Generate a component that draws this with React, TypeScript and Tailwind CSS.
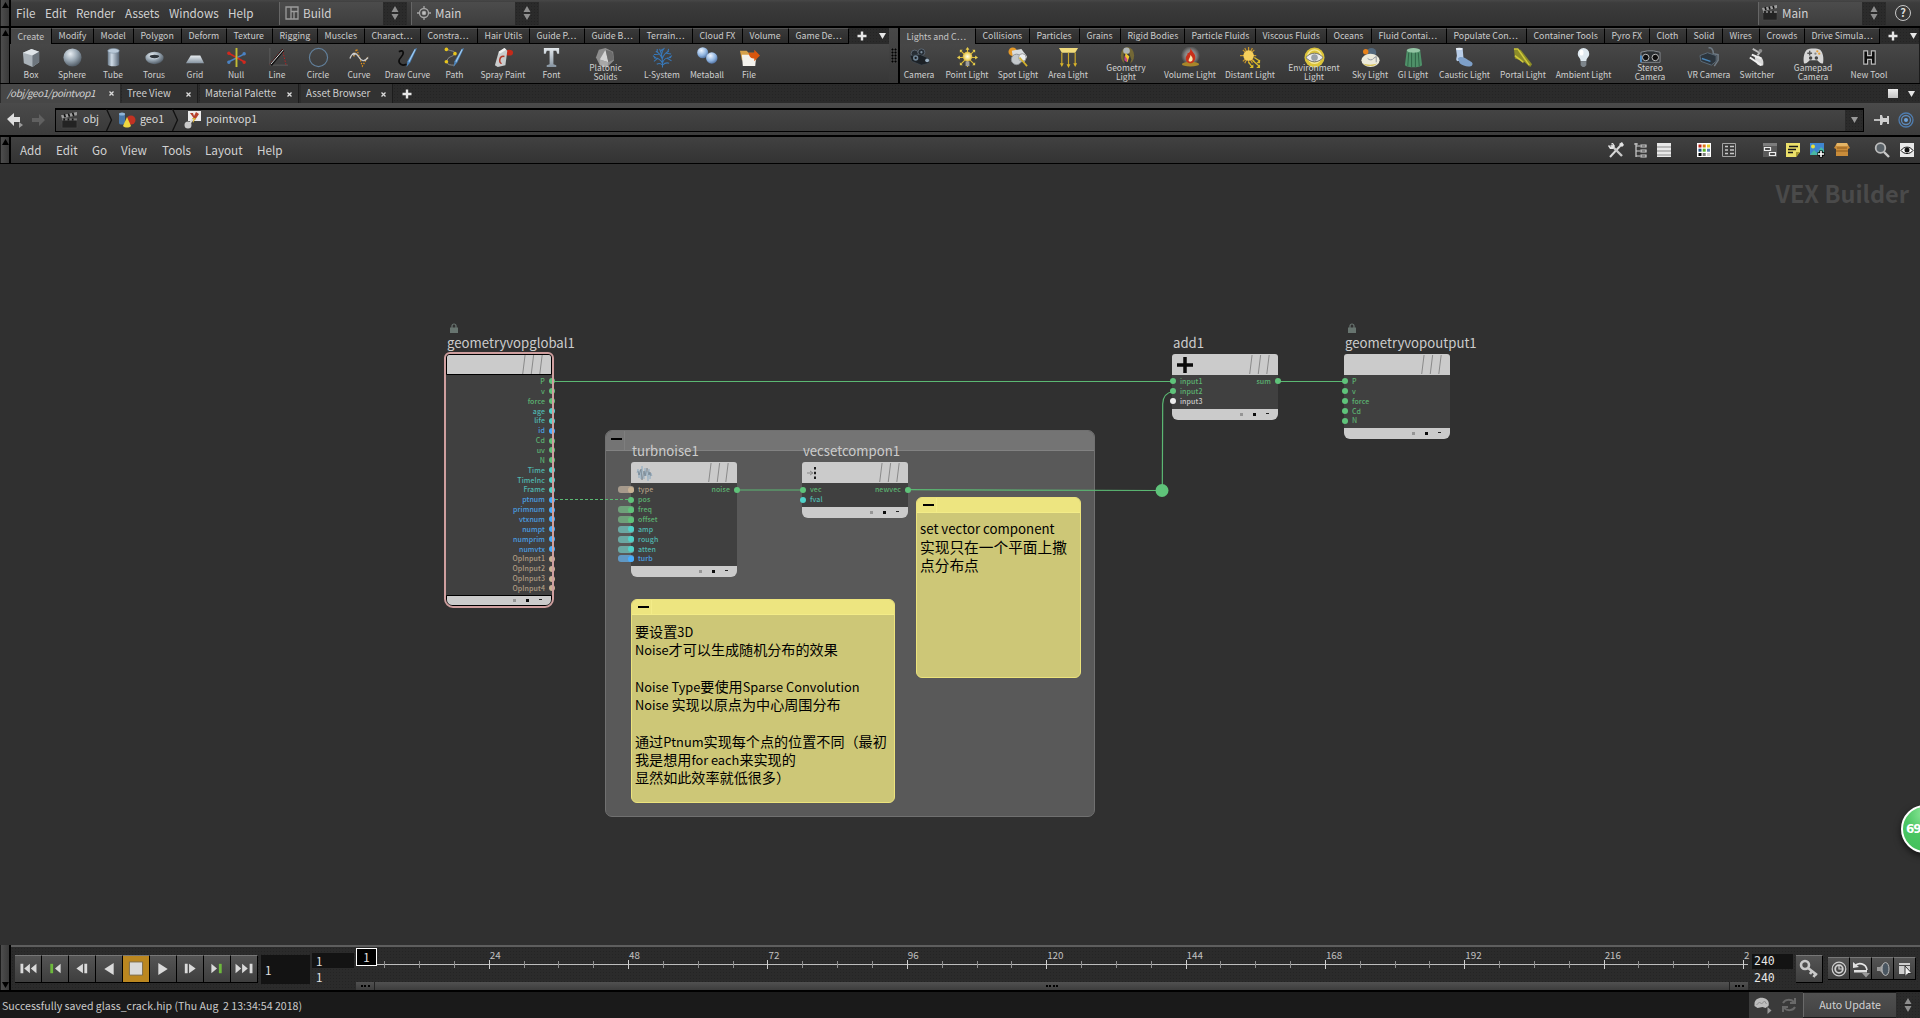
import React from "react";

const PANEL = "bg-[linear-gradient(#414141,#333333)]";
const DOTS = "bg-[#2b2b2b] bg-[radial-gradient(#242424_0.6px,transparent_0.9px)] bg-[size:3px_3px]";

/* ---------- shelf icons, all on a 22 x 22 grid ---------- */

const Defs = () => (
  <svg className="absolute h-0 w-0" aria-hidden="true">
    <defs>
      <radialGradient id="ball" cx=".38" cy=".3" r=".75">
        <stop offset="0" stopColor="#e8eef3" />
        <stop offset=".5" stopColor="#9aa8b4" />
        <stop offset="1" stopColor="#4a545e" />
      </radialGradient>
      <radialGradient id="blueball" cx=".38" cy=".3" r=".75">
        <stop offset="0" stopColor="#eef5ff" />
        <stop offset=".6" stopColor="#8fb4e0" />
        <stop offset="1" stopColor="#4a6a9a" />
      </radialGradient>
      <linearGradient id="tube" x1="0" x2="1" y1="0" y2="0">
        <stop offset="0" stopColor="#6b7c8c" />
        <stop offset=".35" stopColor="#cfdbe6" />
        <stop offset="1" stopColor="#566474" />
      </linearGradient>
      <linearGradient id="steel" x1="0" x2="0" y1="0" y2="1">
        <stop offset="0" stopColor="#e6ebef" />
        <stop offset="1" stopColor="#8593a0" />
      </linearGradient>
      <radialGradient id="glow">
        <stop offset="0" stopColor="#fffef0" />
        <stop offset=".6" stopColor="#f3dc7a" />
        <stop offset="1" stopColor="#d8b23a" />
      </radialGradient>
      <radialGradient id="halo">
        <stop offset="0" stopColor="#b0b0b0" />
        <stop offset=".6" stopColor="#808080" />
        <stop offset="1" stopColor="#808080" stopOpacity="0" />
      </radialGradient>
    </defs>
  </svg>
);

const pen = (
  <g>
    <path d="M21 1 14 16l-4 5 1-6L18.500 2z" fill="#4f86bd" />
    <path d="m19 2.500-6.500 13" stroke="#a5cdf0" strokeWidth="1.200" />
  </g>
);

const shelfIcons: Record<string, React.ReactNode> = {
  box: (
    <g>
      <path d="m2 6 9-4 8 3v11l-7 5-9-4z" fill="#a9b1b8" />
      <path d="m2 6 9-4 8 3-7 4z" fill="#dfe4e8" />
      <path d="m12 9 7-4v11l-7 5z" fill="#6d757d" />
    </g>
  ),
  sphere: <circle cx="11" cy="11" r="9.500" fill="url(#ball)" />,
  tube: (
    <g>
      <path d="M5 4v14c0 3 12 3 12 0V4z" fill="url(#tube)" />
      <ellipse cx="11" cy="4" rx="6" ry="2.500" fill="#b9c9d8" stroke="#7d90a2" strokeWidth=".6" />
    </g>
  ),
  torus: (
    <g>
      <ellipse cx="11" cy="11.500" rx="9.500" ry="6.500" fill="url(#ball)" />
      <ellipse cx="11" cy="10" rx="5" ry="2" fill="#2f353b" />
      <path d="M6 10.500c2 2.500 8 2.500 10 0" stroke="#c5d0da" fill="none" />
    </g>
  ),
  grid: <path d="M6 9h10l4 8H1z" fill="url(#steel)" />,
  null: (
    <g strokeWidth="1.600" fill="none">
      <path d="m2 16 18-9" stroke="#4b83c4" />
      <path d="m2 6 18 10" stroke="#d2281e" />
      <path d="M11 1v20" stroke="#c3bd34" strokeWidth="2" />
      <circle cx="3" cy="6.500" r="1" stroke="#d2281e" />
      <circle cx="19" cy="16" r="1" stroke="#d2281e" />
      <circle cx="3" cy="16" r="1" stroke="#4b83c4" />
      <circle cx="19" cy="7" r="1" stroke="#4b83c4" />
    </g>
  ),
  line: (
    <g fill="none">
      <path d="M3 1v18h19" stroke="#5c5c5c" />
      <path d="M3 18 16 2l4 17" stroke="#c02020" strokeDasharray="1.500 1.500" />
      <path d="M4 19 17 3" stroke="#111" strokeWidth="3" />
      <path d="M4 18 17 3" stroke="#e8e8e8" />
    </g>
  ),
  circle: <circle cx="11" cy="11" r="9.500" fill="none" stroke="#62809c" strokeWidth="1.200" />,
  curve: (
    <g fill="none">
      <path d="m5 10 3-8 6 18 6-10" stroke="#e09018" strokeWidth="1.300" strokeDasharray="1.500 1.500" />
      <path d="M1 12c2-6 6-7 9-2s6 6 10 1" stroke="#c8c8c8" strokeWidth="1.400" />
      <circle cx="5" cy="7.500" r="1" stroke="#ddd" />
    </g>
  ),
  draw: (
    <g>
      <path d="M2 5c5-3 6 2 2 6s-1 10 6 7" fill="none" stroke="#0c0c0c" strokeWidth="1.800" />
      {pen}
    </g>
  ),
  path: (
    <g>
      <path d="M3 2c3 3 9 1 8 5s-8 2-8 9c1 3 4 3 8 3" fill="none" stroke="#8c8c8c" />
      <g fill="#e8c51c">
        <circle cx="2.500" cy="2.500" r="1.900" />
        <circle cx="11.500" cy="7" r="1.900" />
        <circle cx="2.500" cy="15.500" r="1.900" />
      </g>
      {pen}
    </g>
  ),
  spray: (
    <g>
      <ellipse cx="17" cy="6" rx="4" ry="3" fill="#c32a1a" />
      <path d="M6 5 12 1l3 3-2 15-8 2-3-2z" fill="#c9cccd" />
      <path d="m6 5 6-4 2 2-7 4z" fill="#f2f2f2" />
      <path d="M12 10c-6-2-6 8-3 7" fill="none" stroke="#b33a2a" strokeWidth="1.600" />
    </g>
  ),
  font: <path d="M3 1h16v6h-2l-1-3h-3v14l3 1v2H6v-2l3-1V4H6L5 7H3z" fill="url(#steel)" />,
  platonic: (
    <g>
      <path d="m11 1 8 4 1 9-7 7-8-2-4-8 3-8z" fill="#8d8d8d" />
      <path d="m11 3-6 10 9 3z" fill="#d4d4d4" />
      <path d="m11 3 3 13 6-3-2-8z" fill="#6c6c6c" />
      <path d="m5 13 9 3-1 5-8-2z" fill="#a8a8a8" />
    </g>
  ),
  lsystem: (
    <g stroke="#3878b8" strokeWidth="1.100" fill="none">
      <path d="M11 21.500C11 17 11 12 10 8M11 17C9 13 6 11 2 11.500M11 17c1-5 4-6 9-6M10.500 12C9 8 7 6 4 4.500M10.700 13c1-4 3-7 7-8.500M10 8 8 2M10 8c.5-3 1-5 3-7M6 12l-4 3M15.500 11.500l5 3M7 7.500l-5 .3M15 6.500l5 .8M5.500 5.500V2M16.500 5l1-3M9 5l2-3M4 11.500 1 9M18 11l3-2M11 19c2-2 4-3 7-2M11 19c-2-2-4-2-6-1" />
    </g>
  ),
  metaball: (
    <g>
      <circle cx="6" cy="6" r="5.800" fill="url(#blueball)" />
      <circle cx="15.500" cy="11.500" r="6" fill="url(#blueball)" />
    </g>
  ),
  file: (
    <g>
      <path d="M1 4h7l2 2h8v8H3z" fill="#d6a14a" />
      <path d="M3 8h13l2 2-1 10H4z" fill="#f3f1ec" />
      <path d="M10 6h6V3l6 6-6 6v-3c-3 0-5-1-6-6z" fill="#d9560e" />
    </g>
  ),
  camera: (
    <g>
      <circle cx="6" cy="7" r="3.800" fill="#262d34" stroke="#5d6873" />
      <circle cx="13" cy="5.500" r="3.600" fill="#262d34" stroke="#5d6873" />
      <path d="m1 9 11-1 9 4v5l-8 2-10-4z" fill="#1c2126" stroke="#454f58" strokeWidth=".6" />
      <circle cx="7" cy="11.500" r="2.800" fill="#6f8496" />
      <circle cx="7" cy="11.500" r="1.200" fill="#161a1e" />
      <circle cx="19" cy="14" r="2" fill="#9cb0c2" />
      <circle cx="13" cy="5.500" r="1.200" fill="#7c8d9c" />
    </g>
  ),
  point: (
    <g>
      <path d="M11 1v20M1 11h20M4 4l14 14M18 4 4 18" stroke="#d9b93a" strokeWidth="1.200" />
      <g fill="#e9cf4e">
        <path d="M9 3h4l-2-3zM3 9v4l-3-2zM19 9v4l3-2zM3 3h3l-3 3zM19 3h-3l3 3zM3 19h3l-3-3zM19 19h-3l3-3z" />
      </g>
      <circle cx="11" cy="10" r="5" fill="url(#glow)" />
      <path d="M9 15h4v5H9z" fill="#9d9d9d" />
    </g>
  ),
  spot: (
    <g>
      <circle cx="5" cy="5" r="4.500" fill="#e69a28" />
      <path d="m4 4 10-2 6 8-3 6-7-2-5-4z" fill="#d9dcde" />
      <circle cx="9" cy="13" r="5.500" fill="#c3c7ca" stroke="#8a8f93" />
      <circle cx="15" cy="11" r="4" fill="#eceeef" stroke="#9a9a9a" />
      <path d="m12 11 8 9" stroke="#d3b02a" strokeWidth="1.800" />
    </g>
  ),
  area: (
    <g>
      <path d="M1 1h20l-3 5H4z" fill="#f2dc7c" />
      <path d="M4 6v12M11 6v14M18 6v12" stroke="#cda92a" strokeWidth="1.200" />
      <path d="M2 17h4l-2 4zM9 18h4l-2 4zM16 17h4l-2 4z" fill="#d9b42a" />
    </g>
  ),
  geometry: (
    <g>
      <ellipse cx="12" cy="9" rx="7" ry="9" fill="#8e7d30" opacity=".65" />
      <circle cx="11" cy="4" r="3.500" fill="#aeb4b6" />
      <path d="m8 7 6 0 2 6-2 8h-4l-2-8z" fill="#33383a" />
      <path d="m10 6 4 4-2 6-3-3z" fill="#f1c330" />
      <path d="m9 9 3 4-1 3-2-2z" fill="#c2408c" />
    </g>
  ),
  volume: (
    <g>
      <circle cx="11" cy="9" r="10" fill="url(#halo)" />
      <ellipse cx="11" cy="18" rx="9" ry="2.500" fill="#a8862a" />
      <path d="M11 1c1 4 6 6 5 11-1 4-3 5-5 5s-5-1-5-5c0-3 2-3 2-6 2 1 3-2 3-5z" fill="#c9301a" />
      <path d="M11 8c1 2 3 3 2 6-1 2-4 2-4 0s2-3 2-6z" fill="#f9e9b0" />
    </g>
  ),
  distant: (
    <g>
      <path d="M9 0v17M0 9h17M3 3l12 12M15 3 3 15M5 1l8 16M13 1 5 17" stroke="#c9962a" strokeWidth="1.300" />
      <circle cx="9" cy="9" r="5.500" fill="#f5cf5c" />
      <path d="m15 11 6 4M13 14l7 6M9 16l4 5" stroke="#d9bb2a" strokeWidth="1.400" />
      <path d="M21 13v4h-4zM21 18v4h-4zM14 18v4h-4z" fill="#d9bb2a" />
    </g>
  ),
  environment: (
    <g>
      <circle cx="11" cy="11" r="10.500" fill="#dcc43a" />
      <circle cx="11" cy="10" r="7" fill="none" stroke="#f6e99a" strokeWidth="1.500" />
      <path d="M2 11c5-6 13-6 18 0-5 6-13 6-18 0z" fill="#ececec" stroke="#6b6b6b" />
      <circle cx="11" cy="11" r="3.500" fill="#9aa0a6" />
    </g>
  ),
  sky: (
    <g>
      <circle cx="12" cy="6" r="5" fill="#53687c" />
      <circle cx="6" cy="5" r="2.800" fill="#e8821a" />
      <ellipse cx="11" cy="14" rx="9.500" ry="7" fill="#eceadb" />
      <path d="M8 12c2 2 5 2 6 0l3-2v6" stroke="#8a9099" fill="none" />
      <path d="M3 17c3 4 12 4 15 0-4 2-11 2-15 0z" fill="#d9c35a" />
    </g>
  ),
  gi: (
    <g>
      <path d="M4 3h14l2 16c-3 3-15 3-18 0z" fill="#4f9169" />
      <ellipse cx="11" cy="3.500" rx="7" ry="2.500" fill="#93c5a4" />
      <path d="M6 6 5 20M9 6v15M13 6v15M16 6l1 14" stroke="#2f6345" />
    </g>
  ),
  caustic: (
    <g>
      <path d="M2 1h7l1 11-6 3c-3-1-1-4-1-6z" fill="#b8cde8" />
      <path d="M4 12c3-3 7-1 10 1s7 3 5 6-10 1-13-2z" fill="#7d9fc8" />
      <ellipse cx="5.500" cy="2" rx="3.500" ry="1.200" fill="#eef4fb" />
    </g>
  ),
  portal: (
    <g>
      <path d="m1 2 7 1 12 15-2 3-7-6-9-3z" fill="#8c8c28" />
      <path d="m1 2 4 0 12 17M2 9l9 7" stroke="#cfc93a" strokeWidth="1.600" fill="none" />
    </g>
  ),
  ambient: (
    <g>
      <path d="M11 1a6 6 0 0 1 6 6c0 4-3 4-3 8H8c0-4-3-4-3-8a6 6 0 0 1 6-6z" fill="#dfe9f0" />
      <path d="M8 15h6v4l-2 2h-2l-2-2z" fill="#7d858b" />
      <ellipse cx="9" cy="6" rx="2" ry="3" fill="#fff" />
    </g>
  ),
  stereo: (
    <g>
      <path d="M1 5.500 8 4h6l7 1.500V16H1z" fill="#2b2f32" stroke="#878d92" />
      <circle cx="6" cy="11" r="3.400" fill="#0e0e0e" stroke="#c2c2c2" />
      <circle cx="16" cy="11" r="3.400" fill="#0e0e0e" stroke="#c2c2c2" />
      <path d="M1 9v7" stroke="#4b8ac4" strokeWidth="2" />
    </g>
  ),
  vr: (
    <g>
      <path d="M10 1c3-1 5 2 5 6l5 1v6l-4 6" fill="none" stroke="#6f7a84" strokeWidth="1.600" />
      <path d="m1 9 8-3 9 3v6l-5 4-11-4z" fill="#2c353d" stroke="#5c6c7a" />
      <path d="m3 12 9 3" stroke="#4a86b8" strokeWidth="1.500" />
    </g>
  ),
  switcher: (
    <g>
      <path d="m6 2 7 4-2 3" fill="none" stroke="#bcbcbc" strokeWidth="2" />
      <path d="M8 10c6-2 10 2 9 9-5 2-8-1-9-9z" fill="#d8d8d8" />
      <path d="m3 11 12 8M5 8l10 4" stroke="#efefef" strokeWidth="2.200" />
      <circle cx="14" cy="4" r="2" fill="#8c8c8c" />
    </g>
  ),
  gamepad: (
    <g>
      <path d="M4 3c3-2 11-2 14 0 3 3 4 9 3 14-3 1-5-2-6-3H7c-1 1-3 4-6 3C0 12 1 6 4 3z" fill="#d6d6d6" />
      <path d="M7 4v5M4.500 6.500h5" stroke="#555" strokeWidth="1.500" />
      <circle cx="15" cy="4.500" r="1.200" fill="#e7a13a" />
      <circle cx="17" cy="7" r="1.200" fill="#e7a13a" />
      <circle cx="13" cy="7" r="1.200" fill="#888" />
      <circle cx="8" cy="11.500" r="1.800" fill="#444" />
      <circle cx="14" cy="11.500" r="1.800" fill="#444" />
    </g>
  ),
  newtool: <path d="M5 4h4v5h4V4h4v14h-4v-5H9v5H5z" fill="#0d0d0d" stroke="#bdbdbd" strokeWidth="1.200" />,
};

type Tool = [icon: string, label: string, width: string];

const leftTools: Tool[] = [
  ["box", "Box", "w-[41px]"],
  ["sphere", "Sphere", "w-[41px]"],
  ["tube", "Tube", "w-[41px]"],
  ["torus", "Torus", "w-[41px]"],
  ["grid", "Grid", "w-[41px]"],
  ["null", "Null", "w-[41px]"],
  ["line", "Line", "w-[41px]"],
  ["circle", "Circle", "w-[41px]"],
  ["curve", "Curve", "w-[41px]"],
  ["draw", "Draw Curve", "w-[56px]"],
  ["path", "Path", "w-[38px]"],
  ["spray", "Spray Paint", "w-[59px]"],
  ["font", "Font", "w-[38px]"],
  ["platonic", "Platonic\nSolids", "w-[70px]"],
  ["lsystem", "L-System", "w-[43px]"],
  ["metaball", "Metaball", "w-[47px]"],
  ["file", "File", "w-[37px]"],
];

const rightTools: Tool[] = [
  ["camera", "Camera", "w-[38px]"],
  ["point", "Point Light", "w-[58px]"],
  ["spot", "Spot Light", "w-[44px]"],
  ["area", "Area Light", "w-[56px]"],
  ["geometry", "Geometry\nLight", "w-[60px]"],
  ["volume", "Volume Light", "w-[68px]"],
  ["distant", "Distant Light", "w-[52px]"],
  ["environment", "Environment\nLight", "w-[76px]"],
  ["sky", "Sky Light", "w-[36px]"],
  ["gi", "GI Light", "w-[50px]"],
  ["caustic", "Caustic Light", "w-[53px]"],
  ["portal", "Portal Light", "w-[64px]"],
  ["ambient", "Ambient Light", "w-[57px]"],
  ["stereo", "Stereo\nCamera", "w-[76px]"],
  ["vr", "VR Camera", "w-[42px]"],
  ["switcher", "Switcher", "w-[54px]"],
  ["gamepad", "Gamepad\nCamera", "w-[58px]"],
  ["newtool", "New Tool", "w-[54px]"],
];

const leftTabs: [string, string][] = [
  ["Create", "w-[41px]"],
  ["Modify", "w-[42px]"],
  ["Model", "w-[40px]"],
  ["Polygon", "w-[48px]"],
  ["Deform", "w-[45px]"],
  ["Texture", "w-[46px]"],
  ["Rigging", "w-[45px]"],
  ["Muscles", "w-[47px]"],
  ["Charact…", "w-[56px]"],
  ["Constra…", "w-[57px]"],
  ["Hair Utils", "w-[52px]"],
  ["Guide P…", "w-[55px]"],
  ["Guide B…", "w-[55px]"],
  ["Terrain…", "w-[53px]"],
  ["Cloud FX", "w-[50px]"],
  ["Volume", "w-[46px]"],
  ["Game De…", "w-[60px]"],
];

const rightTabs: [string, string][] = [
  ["Lights and C…", "w-[76px]"],
  ["Collisions", "w-[54px]"],
  ["Particles", "w-[50px]"],
  ["Grains", "w-[41px]"],
  ["Rigid Bodies", "w-[64px]"],
  ["Particle Fluids", "w-[71px]"],
  ["Viscous Fluids", "w-[71px]"],
  ["Oceans", "w-[45px]"],
  ["Fluid Contai…", "w-[75px]"],
  ["Populate Con…", "w-[80px]"],
  ["Container Tools", "w-[78px]"],
  ["Pyro FX", "w-[45px]"],
  ["Cloth", "w-[37px]"],
  ["Solid", "w-[36px]"],
  ["Wires", "w-[37px]"],
  ["Crowds", "w-[45px]"],
  ["Drive Simula…", "w-[75px]"],
];

/* ---------- small shared pieces ---------- */

const Plus = () => (
  <svg viewBox="0 0 10 10" className="h-[10px] w-[10px]">
    <path d="M3.800 .5h2.400v3.300h3.300v2.400H6.200v3.300H3.800V6.200H.5V3.800h3.300z" fill="#e6e6e6" />
  </svg>
);

const Down = ({ fill = "#e6e6e6" }: { fill?: string }) => (
  <svg viewBox="0 0 7 6" className="h-[6px] w-[7px]">
    <path d="M0 0h7L3.500 6z" fill={fill} />
  </svg>
);

const UpDown = ({ className = "" }: { className?: string }) => (
  <div className={`flex w-6 items-center justify-center ${DOTS} ${className}`}>
    <svg viewBox="0 0 8 14" className="h-[14px] w-2">
      <path d="M4 0 7.500 6h-7zM4 14 .5 8h7z" fill="#8f8f8f" />
    </svg>
  </div>
);

const Handle = ({ down = false }: { down?: boolean }) => (
  <div className={`flex w-[11px] shrink-0 border-r-2 border-l border-r-black border-l-[#1c1c1c] bg-[linear-gradient(90deg,#4d4d4d,#3a3a3a)] ${down ? "items-end pb-[2px]" : "items-start pt-[2px]"} justify-center`}>
    <svg viewBox="0 0 7 6" className="h-[6px] w-[7px]">
      <path d={down ? "M0 0h7L3.500 6z" : "M0 6h7L3.500 0z"} fill="#000" />
    </svg>
  </div>
);

const Clapper = ({ className }: { className: string }) => (
  <svg viewBox="0 0 16 16" className={className}>
    <path d="M1 6h14v9H1z" fill="#232323" stroke="#4a4a4a" strokeWidth=".6" />
    <path d="M0 3 15 0v3L1 6z" fill="#9d9d9d" />
    <path d="m3 2 1 3M7 1.500l1 3M11 .8l1 3" stroke="#111" strokeWidth="1.600" />
    <path d="M1 6h14v2H1z" fill="#777" />
    <path d="M3 6v2M7 6v2M11 6v2" stroke="#111" strokeWidth="1.600" />
  </svg>
);

const menuText = "whitespace-nowrap pb-px text-[11.700px] leading-none text-[#d2d2d2]";

/* ---------- top bars ---------- */

const topMenus: [string, string][] = [
  ["File", "w-[29px]"],
  ["Edit", "w-[31px]"],
  ["Render", "w-[49px]"],
  ["Assets", "w-[44px]"],
  ["Windows", "w-[59px]"],
  ["Help", "w-[51px]"],
];

const TopBar = () => (
  <div className="flex h-7 border-b-2 border-black">
    <Handle />
    <div className="flex min-w-0 flex-1 items-center bg-[linear-gradient(#474747_0,#3c3c3c_3px,#323232)]">
      <div className="flex pl-[5px]">
        {topMenus.map(([m, w]) => (
          <div key={m} className={`${menuText} ${w}`}>{m}</div>
        ))}
      </div>
      <div className="flex h-[23px] w-[104px] items-center gap-[4px] border-l border-[#666] bg-[linear-gradient(#4c4c4c,#3e3e3e)] pl-[5px]">
        <svg viewBox="0 0 14 14" className="h-[14px] w-[14px]" fill="none" stroke="#9c9c9c" strokeWidth="1.300">
          <path d="M1 1h12v12H1zM6 1v12M6 5.500h7M9 5.500V13" />
        </svg>
        <span className={menuText}>Build</span>
      </div>
      <UpDown className="h-[23px]" />
      <div className="ml-1 flex h-[23px] w-[104px] items-center gap-[4px] border-l border-[#666] bg-[linear-gradient(#4c4c4c,#3e3e3e)] pl-[5px]">
        <svg viewBox="0 0 14 14" className="h-[14px] w-[14px]" fill="none" stroke="#a6a6a6" strokeWidth="1.300">
          <circle cx="7" cy="7" r="4.500" />
          <circle cx="7" cy="7" r="1.600" fill="#c8c8c8" />
          <path d="M7 0v3M7 11v3M0 7h3M11 7h3" />
        </svg>
        <span className={menuText}>Main</span>
      </div>
      <UpDown className="h-[23px]" />
      <div className="flex-1" />
      <div className="flex h-[23px] w-[104px] items-center gap-1 border-l border-[#666] bg-[linear-gradient(#4c4c4c,#3e3e3e)] pl-[3px]">
        <Clapper className="h-4 w-4" />
        <span className={menuText}>Main</span>
      </div>
      <UpDown className="h-[23px]" />
      <div className="flex w-[34px] justify-center">
        <div className="flex h-4 w-4 items-center justify-center rounded-full border-[1.5px] border-[#c8c8c8] text-[11px] leading-none font-bold text-[#dcdcdc]">
          <span className="-mt-[2px]">?</span>
        </div>
      </div>
    </div>
  </div>
);

const Shelf = ({ tabs, tools, className, row, tail }: { tabs: [string, string][]; tools: Tool[]; className: string; row: string; tail: string }) => (
  <div className={`flex flex-col ${className}`}>
    <div className={`flex h-[16px] ${DOTS}`}>
      {tabs.map(([t, w], i) => (
        <div
          key={t}
          className={`flex items-center border-r border-t border-t-[#555] border-r-black pt-px pl-[6.500px] text-[8.800px] leading-none whitespace-nowrap ${w} ${
            i === 0 ? "bg-[#464646] text-[#c4c4c4]" : "border-b border-b-black bg-[linear-gradient(#3a3a3a,#2a2a2a)] text-[#cccccc]"
          }`}
        >
          {t}
        </div>
      ))}
      <div className={`flex items-center ${tail}`}>
        <Plus />
        <Down />
      </div>
    </div>
    <div className={`flex h-[39px] bg-[linear-gradient(#474747,#363636)] ${row}`}>
      {tools.map(([icon, label, w]) => (
        <div key={icon} className={`flex shrink-0 flex-col items-center ${w}`}>
          <svg viewBox="0 0 22 22" className="mt-[3px] h-[21px] w-[21px] shrink-0">{shelfIcons[icon]}</svg>
          <div className={`relative text-center text-[8.500px] whitespace-pre text-[#d0d0d0] ${label.includes("\n") ? "-mt-[5px] leading-[9px]" : "mt-px leading-[10px]"}`}>
            {label}
          </div>
        </div>
      ))}
    </div>
  </div>
);

const Shelves = () => (
  <div className="flex h-[56px] border-b border-black">
    <Handle />
    <Shelf tabs={leftTabs} tools={leftTools} className="w-[878px]" row="-ml-px pl-[0.5px]" tail="gap-[12px] pl-[8px]" />
    <div className="flex w-[9px] items-center justify-center bg-[linear-gradient(#484848,#383838)]">
      <div className="h-[15px] w-[6px] bg-[radial-gradient(#000_0.9px,transparent_1.1px)] bg-[size:3px_3px]" />
    </div>
    <div className="w-[2px] bg-black" />
    <Shelf tabs={rightTabs} tools={rightTools} className="w-[1019px]" row="" tail="gap-[12px] pl-[8px]" />
  </div>
);

const paneTabs: [string, string, string][] = [
  ["Tree View", "w-[76px]", "ml-[2px]"],
  ["Material Palette", "w-[99px]", "ml-[2px]"],
  ["Asset Browser", "w-[92px]", "ml-[2px]"],
];

const Close = () => (
  <svg viewBox="0 0 5 5" className="h-[5px] w-[5px]">
    <path d="m.5 .5 4 4m0-4-4 4" stroke="#dcdcdc" strokeWidth="1.300" />
  </svg>
);

const PaneTabs = () => (
  <div className={`flex h-[19px] items-stretch ${DOTS}`}>
    <div className="ml-px flex w-[119px] items-center justify-between bg-[#474747] pr-[6px] pl-[6px] text-[9.900px] leading-none tracking-[-0.4px] text-[#d2d2d2] italic">
      /obj/geo1/pointvop1
      <Close />
    </div>
    {paneTabs.map(([t, w, m]) => (
      <div key={t} className={`flex items-center justify-between border-r border-r-[#1c1c1c] bg-[#323232] pt-px pr-[6px] pl-[5px] text-[9.800px] leading-none whitespace-nowrap text-[#cfcfcf] ${w} ${m}`}>
        {t}
        <Close />
      </div>
    ))}
    <div className="flex flex-1 items-center pl-[9px]"><Plus /></div>
    <div className="flex items-center gap-[10px] pr-[5px]">
      <div className="h-[9px] w-[10px] bg-[linear-gradient(#f0f0f0,#c4c4c4)]" />
      <Down />
    </div>
  </div>
);

const Chevron = () => (
  <svg viewBox="0 0 7 22" className="h-[22px] w-[7px]">
    <path d="m.5 0 5 11-5 11" fill="none" stroke="#111" strokeWidth="1.300" />
  </svg>
);

const pathText = "pb-px text-[10.700px] leading-none text-[#dadada]";

const PathBar = () => (
  <div className="flex h-[32px] items-center bg-[linear-gradient(#4a4a4a,#3c3c3c)] pt-[1px]">
    <div className="flex w-[55px] items-center gap-[9px] pl-[7px]">
      <svg viewBox="0 0 16 16" className="h-4 w-4">
        <path d="M0 7 7 1v4h6v5H7v4z" fill="#dedede" />
        <path d="m12 10 4 3-4 3z" fill="#9a9a9a" />
      </svg>
      <svg viewBox="0 0 14 14" className="h-[14px] w-[14px]">
        <path d="M13 7 7 1v4H0v4h7v4z" fill="#606060" />
      </svg>
    </div>
    <div className="flex h-[24px] w-[1809px] items-center border border-black border-t-2 bg-[linear-gradient(#444,#3a3a3a)]">
      <Clapper className="ml-[5px] h-[17px] w-[17px]" />
      <span className={`ml-[5px] w-[23px] ${pathText}`}>obj</span>
      <Chevron />
      <svg viewBox="0 0 18 18" className="ml-[5px] h-[18px] w-[18px]">
        <path d="M1 3v9c0 2 6 2 6 0V3z" fill="#4a78a8" />
        <ellipse cx="4" cy="3" rx="3" ry="1.500" fill="#8fb4d8" />
        <circle cx="13" cy="9" r="4.500" fill="#c23222" />
        <path d="m9 6 4 9c-2 2-6 2-8 0z" fill="#f0d840" />
      </svg>
      <span className={`ml-[4px] w-[32px] ${pathText}`}>geo1</span>
      <Chevron />
      <svg viewBox="0 0 18 18" className="ml-[5px] h-[18px] w-[18px]">
        <path d="M4 0h13v10H4z" fill="#ececec" />
        <path d="M6 2h3l1 3 2-4 3 2-4 6z" fill="#b5402c" />
        <path d="m8 7 4 0-3 5" fill="#d8b030" />
        <circle cx="4" cy="14" r="3.500" fill="#c9c9c9" />
        <path d="M6 12 9 8" stroke="#d8d8d8" strokeWidth="2" />
      </svg>
      <span className={`ml-[4px] flex-1 ${pathText}`}>pointvop1</span>
      <div className={`flex h-full w-[18px] items-center justify-center ${DOTS}`}><Down fill="#9a9a9a" /></div>
    </div>
    <div className="flex flex-1 items-center justify-end gap-[7px] pr-[6px]">
      <svg viewBox="0 0 17 14" className="h-[14px] w-[17px]">
        <path d="M0 7h7" stroke="#ddd" strokeWidth="1.600" />
        <path d="M6 2h2l1 3h4V3h2v8h-2V9H9l-1 3H6z" fill="#cfcfcf" />
      </svg>
      <svg viewBox="0 0 16 16" className="h-4 w-4" fill="none">
        <circle cx="8" cy="8" r="7" stroke="#4f7cae" strokeWidth="1.300" />
        <circle cx="8" cy="8" r="4.500" stroke="#5d8abb" strokeWidth="1.300" />
        <circle cx="8" cy="8" r="2" fill="#6ea5df" />
      </svg>
    </div>
  </div>
);

const netMenus: [string, string][] = [
  ["Add", "w-[36px]"],
  ["Edit", "w-[36px]"],
  ["Go", "w-[29px]"],
  ["View", "w-[41px]"],
  ["Tools", "w-[43px]"],
  ["Layout", "w-[52px]"],
  ["Help", "w-[40px]"],
];

const netIcons: [React.ReactNode, string][] = [
  [
    <g key="tools">
      <path d="M2 15 13 3" stroke="#d9d9d9" strokeWidth="2" />
      <path d="m3 3 11 11" stroke="#c9c9c9" strokeWidth="2.400" />
      <path d="M1 3l2 2 2-2-2-2h2l2 3-2 3-3 0-2-3zM11 2l3-2 2 3-2 2z" fill="#e3e3e3" />
    </g>,
    "mr-[8px]",
  ],
  [
    <path key="tree" d="M4 1v14M4 4h4M4 9h4M4 14h4M2 2h4M9 3h5v2H9zM9 8h5v2H9zM9 13h5v2H9z" stroke="#d0d0d0" fill="none" strokeWidth="1.200" />,
    "mr-[8px]",
  ],
  [
    <g key="list">
      <path d="M1 1h14v14H1z" fill="#e9e9e9" />
      <path d="M1 5h14M1 9h14M1 13h14" stroke="#a9a9a9" strokeWidth="1.500" />
    </g>,
    "mr-[24px]",
  ],
  [
    <g key="palette">
      <path d="M1 1h14v14H1z" fill="#fff" />
      <path d="M2.500 2.500h3v3h-3z" fill="#c22418" />
      <path d="M6.700 2.500h3v3h-3z" fill="#e07818" />
      <path d="M11 2.500h3v3h-3z" fill="#e4cf28" />
      <path d="M2.500 6.700h3v3h-3z" fill="#24507c" />
      <path d="M6.700 6.700h3v3h-3z" fill="#58b424" />
      <path d="M11 6.700h3v3h-3z" fill="#5a7fb4" />
      <path d="M2.500 11h3v3h-3z" fill="#000" />
      <path d="M6.700 11h3v3h-3z" fill="#7c7c7c" />
      <path d="M11 11h3v3h-3z" fill="#d0d0d0" />
    </g>,
    "mr-[9px]",
  ],
  [
    <g key="info">
      <path d="M1.500 1.500h13v13h-13z" fill="#3b3b3b" stroke="#a4a4a4" />
      <path d="M4 4.500h3M9 4.500h4M4 8h3M9 8h4M4 11.500h3M9 11.500h4" stroke="#c8c8c8" strokeWidth="1.500" />
    </g>,
    "mr-[25px]",
  ],
  [
    <g key="netbox">
      <path d="M1 1h14v14H1z" fill="#5a5a5a" />
      <path d="M1 1h14v3H1z" fill="#7d7d7d" />
      <path d="M2.500 5.500h6v3h-6zM7.500 10.500h6v3h-6z" fill="#4a4a4a" stroke="#eee" strokeWidth="1.200" />
    </g>,
    "mr-[7px]",
  ],
  [
    <g key="note">
      <path d="M1 1h14v9l-4 5H1z" fill="#ece06a" />
      <path d="M4 4.500h9M3 7.500h8M3 10.500h5" stroke="#1a1a1a" strokeWidth="1.300" />
      <path d="M15 10h-4v5z" fill="#a89a30" />
    </g>,
    "mr-[8px]",
  ],
  [
    <g key="image">
      <path d="M1 1h14v12H1z" fill="#3f86d0" />
      <circle cx="4" cy="4.500" r="2" fill="#e9df3a" />
      <path d="m1 13 4-5 3 3 4-6 3 3v5z" fill="#48b8a4" />
      <path d="M12 8.500v7M8.500 12h7" stroke="#000" strokeWidth="3.500" />
      <path d="M12 9v6M9 12h6" stroke="#fff" strokeWidth="1.600" />
    </g>,
    "mr-[9px]",
  ],
  [
    <g key="package">
      <path d="M3 1h10l3 5-2 1v7H2V7L0 6z" fill="#c98c3a" />
      <path d="M3 6h10M2 9h12" stroke="#8f5c1c" />
      <path d="M3 1h10l1 3H2z" fill="#e4b566" />
    </g>,
    "mr-[24px]",
  ],
  [
    <g key="zoom" fill="none">
      <circle cx="6.500" cy="6" r="4.800" stroke="#bdbdbd" strokeWidth="1.800" fill="#5a6268" />
      <path d="m10 10 5 5" stroke="#c9c9c9" strokeWidth="2.400" />
    </g>,
    "mr-[9px]",
  ],
  [
    <g key="eye">
      <path d="M1 1h14v14H1z" fill="#e9e9e9" />
      <path d="M2 8.500c3-4.500 9-4.500 12 0-3 4-9 4-12 0z" fill="#fff" stroke="#111" strokeWidth="1" />
      <circle cx="8" cy="8" r="2.500" fill="#111" />
    </g>,
    "mr-[5px]",
  ],
];

const NetMenu = () => (
  <div className="flex h-[29px] border-t-2 border-b border-black">
    <Handle />
    <div className={`flex flex-1 items-center pl-[9px] ${PANEL}`}>
      {netMenus.map(([m, w]) => (
        <div key={m} className={`${menuText} ${w}`}>{m}</div>
      ))}
      <div className="flex-1" />
      {netIcons.map(([icon, m], i) => (
        <svg key={i} viewBox="0 0 16 16" className={`h-4 w-4 shrink-0 ${m}`}>{icon}</svg>
      ))}
    </div>
  </div>
);

/* ---------- network canvas ---------- */

const kinds = {
  v: { dot: "bg-[#5fc37a]", text: "text-[#5cb271]", pill: "bg-[#6fa07a]" },
  f: { dot: "bg-[#50d2c8]", text: "text-[#50b8b0]", pill: "bg-[#6ba8a3]" },
  i: { dot: "bg-[#46aeff]", text: "text-[#4a9fe2]", pill: "bg-[#6098c4]" },
  s: { dot: "bg-[#c8b294]", text: "text-[#ae9b82]", pill: "bg-[#a69a8c]" },
  w: { dot: "bg-[#ececec]", text: "text-[#c8c8c8]", pill: "bg-[#999999]" },
};
type Kind = keyof typeof kinds;
type Port = { label: string; kind: Kind; pill?: boolean };

const p = (label: string, kind: Kind, pill = false): Port => ({ label, kind, pill });

const PortList = ({ ports, side }: { ports: Port[]; side: "in" | "out" }) => (
  <div className={`flex flex-col ${side === "in" ? "-ml-[13px] items-start" : "-mr-[3px] items-end"}`}>
    {ports.map((port) => (
      <div key={port.label} className={`flex h-[9.860px] items-center gap-1 text-[7px] leading-none ${side === "out" ? "flex-row-reverse" : ""}`}>
        <div className={`flex h-[7px] items-center justify-end rounded-[3px] ${side === "in" ? "w-[16px]" : "w-[6px]"} ${port.pill ? kinds[port.kind].pill : ""}`}>
          <div className={`h-[6px] w-[6px] rounded-full ${kinds[port.kind].dot}`} />
        </div>
        <span className={`font-medium tracking-[0.1px] ${kinds[port.kind].text}`}>{port.label}</span>
      </div>
    ))}
  </div>
);

const FlagStrip = () => (
  <div className="flex items-center justify-end gap-[10px] pr-[9.500px]">
    <div className="h-[3px] w-[3px] bg-[#959595]" />
    <div className="h-[2.500px] w-[3px] bg-[#0c0c0c]" />
    <div className="mb-[2px] h-[1.500px] w-[3px] bg-[#222]" />
  </div>
);

const Lock = () => (
  <svg viewBox="0 0 8 10" className="h-[10px] w-2">
    <path d="M2 5V3a2 2 0 0 1 4 0v2" fill="none" stroke="#6a7672" strokeWidth="1.200" />
    <path d="M0 4.500h8V10H0z" fill="#67746f" />
  </svg>
);

const Node = ({
  place, title, glyph, inputs = [], outputs = [], body, selected = false, locked = false,
}: {
  place: string; title: string; glyph?: React.ReactNode; inputs?: Port[]; outputs?: Port[]; body: string; selected?: boolean; locked?: boolean;
}) => (
  <div className={`absolute flex w-[106px] flex-col ${place}`}>
    <div className="flex h-[11px] items-start pl-[4px]">{locked && <Lock />}</div>
    <div className="mb-[3px] flex h-[17px] items-center pl-px text-[13.200px] leading-none whitespace-nowrap text-[#cccccc]">{title}</div>
    <div className={`flex flex-col rounded-t-[4px] rounded-b-[7px] ${selected ? "outline-[2px] outline-[#cf9f9f]" : ""}`}>
      <div className={`flex h-[21px] items-center justify-between rounded-t-[3px] bg-[#cbcbcb] ${selected ? "border border-black" : ""}`}>
        <div className="pl-[5px]">{glyph}</div>
        <svg viewBox="0 0 30 20" className="h-[19px] w-[30px]" fill="none" stroke="#868686">
          <path d="M3.500 0 1 20M12.500 0 10 20M21.500 0 19 20" />
        </svg>
      </div>
      <div className={`flex justify-between bg-[#404040] ${body}`}>
        <PortList ports={inputs} side="in" />
        <PortList ports={outputs} side="out" />
      </div>
      <div className={`flex h-[11px] flex-col justify-center rounded-b-[6px] bg-[#cbcbcb] ${selected ? "border border-black" : ""}`}><FlagStrip /></div>
    </div>
  </div>
);

/* Latin runs are set a little smaller than the Chinese text around them. */
const Mixed = ({ text, latin }: { text: string; latin: string }) => (
  <>
    {text.split("\n").map((line, n) => (
      <div key={n} className="h-[1lh] whitespace-pre">
        {line.split(/([\x20-\x7e]+)/).map((run, i) => (i % 2 ? <span key={i} className={`leading-none ${latin}`}>{run}</span> : run))}
      </div>
    ))}
  </>
);

const Sticky = ({ place, text, children }: { place: string; text: string; children: React.ReactNode }) => (
  <div className={`absolute flex flex-col overflow-hidden rounded-[6px] border border-[#ece37c] bg-[#cdc777] ${place}`}>
    <div className="flex h-[15px] shrink-0 items-stretch border-b border-[#f3ec88] bg-[#ede580]">
      <div className="flex w-[20px] items-center border-r border-[#f3ec88] pl-[6px]"><div className="h-[2px] w-[11px] bg-black" /></div>
    </div>
    <div className={`pl-[3px] text-black ${text}`}>{children}</div>
  </div>
);

const Canvas = () => (
  <div className="relative h-[781px] overflow-hidden bg-[#303030]">
    <div className="absolute top-[14px] right-[11px] text-[23.500px] leading-[30px] font-bold text-[#4a4a4a]">VEX Builder</div>

    <div className="absolute top-[266px] left-[605px] h-[387px] w-[490px] overflow-hidden rounded-[7px] border border-[#707070] bg-[#595959]">
      <div className="flex h-[20px] border-b border-[#828282] bg-[#747474]">
        <div className="flex w-[19px] items-center border-r border-[#7e7e7e] pl-[5px]"><div className="-mt-[3px] h-[2px] w-[11px] bg-black" /></div>
      </div>
    </div>

    <svg className="absolute top-0 left-0 h-[781px] w-[1920px]" viewBox="0 164 1920 781" fill="none" stroke="#5bb873" strokeWidth="1.200">
      <path d="M553 381.500H1173M1278 381.500h67M736 490h67M908 489.700l254 .8" />
      <path d="M555 499.500h76" strokeDasharray="3 2" />
      <path d="M1162.300 490 1162.700 404Q1163 393 1173 391.500" />
      <circle cx="1162" cy="490.500" r="6.500" fill="#5fc37a" stroke="none" />
    </svg>

    <Node
      place="left-[446px] top-[159px]" title="geometryvopglobal1" selected locked body="h-[220px] pt-[1.500px]"
      outputs={[
        p("P", "v"), p("v", "v"), p("force", "v"), p("age", "f"), p("life", "f"), p("id", "i"), p("Cd", "v"), p("uv", "v"),
        p("N", "v"), p("Time", "f"), p("TimeInc", "f"), p("Frame", "f"), p("ptnum", "i"), p("primnum", "i"), p("vtxnum", "i"),
        p("numpt", "i"), p("numprim", "i"), p("numvtx", "i"), p("OpInput1", "s"), p("OpInput2", "s"), p("OpInput3", "s"), p("OpInput4", "s"),
      ]}
    />
    <Node
      place="left-[631px] top-[267px]" title="turbnoise1" body="h-[83px] pt-[2px]"
      inputs={[p("type", "s", true), p("pos", "v"), p("freq", "v", true), p("offset", "v", true), p("amp", "f", true), p("rough", "f", true), p("atten", "f", true), p("turb", "i", true)]}
      outputs={[p("noise", "v")]}
      glyph={
        <svg viewBox="0 0 17 18" className="h-[18px] w-[17px]" fill="none" strokeWidth=".9">
          <path d="m1 9 1-4 1 9 1-8 1 9 1-13 1 9 1 4 1-11 1 8 1-5 1 10 1-12 1 10 1-6 1 3" stroke="#9db3c4" />
          <path d="m2 7 1 4 2-6 1 11 2-9 1 5 2-8 2 7 1-3 1 4" stroke="#5c6a76" strokeWidth=".5" />
        </svg>
      }
    />
    <Node
      place="left-[802px] top-[267px]" title="vecsetcompon1" body="h-[24px] pt-[2px] pl-px"
      inputs={[p("vec", "v"), p("fval", "f")]} outputs={[p("newvec", "v")]}
      glyph={
        <svg viewBox="0 0 10 12" className="h-3 w-[10px]">
          <path d="M0 6h5M3 4l3 2-3 2" fill="none" stroke="#777" strokeWidth=".8" />
          <path d="M7 0h2v2.500H7zM7 4.800h2v2.500H7zM7 9.500h2V12H7z" fill="#1c1c1c" />
        </svg>
      }
    />
    <Node
      place="left-[1172px] top-[159px]" title="add1" body="h-[34px] pt-[1.500px] pl-px"
      inputs={[p("input1", "v"), p("input2", "v"), p("input3", "w")]} outputs={[p("sum", "v")]}
      glyph={<svg viewBox="0 0 16 16" className="h-4 w-4"><path d="M8 0v16M0 8h16" stroke="#0a0a0a" strokeWidth="3.500" /></svg>}
    />
    <Node
      place="left-[1344px] top-[159px]" title="geometryvopoutput1" locked body="h-[53px] pt-[1.500px] pl-px"
      inputs={[p("P", "v"), p("v", "v"), p("force", "v"), p("Cd", "v"), p("N", "v")]}
    />

    <Sticky place="left-[631px] top-[435px] h-[204px] w-[264px]" text="pt-[7px] text-[14.100px] leading-[18.300px]">
      <Mixed
        latin="text-[12.800px]"
        text={"要设置3D\nNoise才可以生成随机分布的效果\n\nNoise Type要使用Sparse Convolution\nNoise 实现以原点为中心周围分布\n\n通过Ptnum实现每个点的位置不同（最初\n我是想用for each来实现的\n显然如此效率就低很多）"}
      />
    </Sticky>
    <Sticky place="left-[916px] top-[333px] h-[181px] w-[165px]" text="pt-[6px] text-[14.700px] leading-[18.700px]">
      <Mixed latin="text-[13.250px]" text={"set vector component\n实现只在一个平面上撒\n点分布点"} />
    </Sticky>

    <div className="absolute top-[641px] left-[1901px] h-[48px] w-[48px] rounded-full border-[2.5px] border-white bg-[radial-gradient(circle_at_50%_15%,#8ee89a,#4cc764_45%,#3fbf58)] shadow-[0_3px_7px_rgba(0,0,0,0.6)]">
      <span className="block pt-[15px] pl-[3px] font-['DejaVu_Sans'] text-[12px] leading-[14px] font-bold tracking-[-1px] whitespace-nowrap text-white">69%</span>
    </div>
  </div>
);

/* ---------- playbar ---------- */

const transport = [
  <g key="first"><path d="M1 3h3v10H1zM11 3v10L5 8zM18 3v10l-6-5z" /></g>,
  <g key="prevkey"><path d="M4 3h3v10H4z" fill="#6db93c" /><path d="M15 3v10L9 8z" /></g>,
  <g key="stepback"><path d="M10 3v10L3 8zM11.500 3h3v10h-3z" /></g>,
  <g key="back"><path d="M14 2v13L4 8.500z" /></g>,
  <g key="stop"><path d="M2 1h14v14H2z" stroke="#7a6a4a" /></g>,
  <g key="play"><path d="M4 2v13l10-6.500z" /></g>,
  <g key="stepfwd"><path d="M3.500 3h3v10h-3zM8 3v10l7-5z" /></g>,
  <g key="nextkey"><path d="M3 3v10l6-5z" /><path d="M11 3h3v10h-3z" fill="#6db93c" /></g>,
  <g key="last"><path d="M0 3v10l6-5zM7 3v10l6-5zM15 3h3v10h-3z" /></g>,
];

const TICK_PX = 34.84;
const ticks = Array.from({ length: 40 }, (_, i) => i + 1);

const btn = "flex items-center justify-center border-r border-b border-r-black border-b-black border-t border-t-[#777] bg-[linear-gradient(#545454,#3e3e3e)]";
const numText = "text-[11.700px] leading-none text-[#e2e2e2]";
const monoText = "font-['DejaVu_Sans_Mono'] text-[11.500px] leading-none text-[#e6e6e6]";

const Playbar = () => (
  <div className="flex h-[47px] border-b-2 border-b-black">
    <Handle down />
    <div className={`flex flex-1 border-t-2 border-t-[#5e5e5e] ${DOTS}`}>
      <div className="mt-[8px] ml-[4px] flex h-[28px]">
        {transport.map((g, i) => (
          <div key={i} className={`flex w-[27px] items-center justify-center border-r border-b border-black border-t border-t-[#777] ${i === 4 ? "bg-[#bb8720]" : "bg-[linear-gradient(#545454,#3e3e3e)]"}`}>
            <svg viewBox="0 0 18 17" className="h-[16px] w-[18px]" fill="#dadada">{g}</svg>
          </div>
        ))}
      </div>
      <div className={`mt-[8px] ml-[3px] flex h-[29px] w-[49px] items-center bg-[#131313] pl-[4px] ${numText}`}>1</div>
      <div className="mt-[6px] ml-[2px] flex w-[42px] flex-col">
        <div className={`flex h-[15px] items-center bg-[#131313] pl-[4px] ${numText}`}>1</div>
        <div className={`flex h-[18px] items-center pl-[4px] ${numText}`}>1</div>
      </div>
      <div className="ml-[2px] flex w-[1392px] flex-col">
        <div className="relative h-[35px]">
          <div className="absolute top-[17px] left-0 h-px w-full bg-[#bdbdbd]" />
          {ticks.map((i) => (
            <React.Fragment key={i}>
              <div className={`absolute w-px ${i % 4 === 0 ? "top-[13px] h-[9px] bg-[#d0d0d0]" : "top-[14px] h-[7px] bg-[#8e8e8e]"}`} style={{ left: -6.6 + i * TICK_PX }} />
              {i % 4 === 0 && (
                <div className="absolute top-[2px] text-[9.800px] leading-[12px] text-[#c2c2c2]" style={{ left: -5.6 + i * TICK_PX }}>
                  {i === 40 ? "2" : i * 6}
                </div>
              )}
            </React.Fragment>
          ))}
          <div className={`absolute top-[1px] left-0 flex h-[18px] w-[21px] items-center justify-center border border-white bg-black ${numText}`}>1</div>
        </div>
        <div className="flex h-[8px] items-center bg-[linear-gradient(#515151,#3d3d3d)]">
          <div className="flex h-full w-[19px] items-center justify-center border-r border-[#222]"><div className="w-[9px] border-t-2 border-dotted border-black" /></div>
          <div className="flex flex-1 justify-center"><div className="w-[12px] border-t-2 border-dotted border-black" /></div>
          <div className="flex h-full w-[19px] items-center justify-center border-l border-[#222]"><div className="w-[9px] border-t-2 border-dotted border-black" /></div>
        </div>
      </div>
      <div className="mt-[7px] ml-[4px] flex w-[41px] flex-col">
        <div className={`flex h-[15px] items-center bg-[#131313] pl-[2px] ${monoText}`}>240</div>
        <div className={`flex h-[19px] items-center pl-[2px] ${monoText}`}>240</div>
      </div>
      <div className={`mt-[8px] ml-[3px] h-[28px] w-[27px] ${btn}`}>
        <svg viewBox="0 0 20 20" className="h-5 w-5" fill="none" stroke="#c9c9c9" strokeWidth="2.600">
          <circle cx="6" cy="6" r="4" />
          <path d="m9 9 9 7M13 12l-2 3M16.500 15l-2 3" />
        </svg>
      </div>
      <div className="mt-[10px] ml-[5px] flex h-[23px]">
        <div className={`w-[22px] ${btn}`}>
          <svg viewBox="0 0 16 16" className="h-4 w-4" fill="none" stroke="#d0d0d0" strokeWidth="1.200">
            <circle cx="8" cy="8" r="6.800" /><circle cx="8" cy="8" r="3.800" strokeWidth="1.800" /><path d="M8 5v3h3" />
          </svg>
        </div>
        <div className={`w-[22px] ${btn}`}>
          <svg viewBox="0 0 18 18" className="h-[18px] w-[18px]">
            <path d="M3 6c3-4 11-3 12 4" fill="none" stroke="#e6e6e6" strokeWidth="1.600" />
            <path d="M1 8V2l6 5zM2 10h13v2.500H2z" fill="#e0e0e0" />
            <path d="M10 13h8l-4 4.500z" fill="#999" />
          </svg>
        </div>
        <div className={`w-[22px] ${btn}`}>
          <svg viewBox="0 0 16 16" className="h-4 w-4">
            <path d="M2 6h3l4-4v12l-4-4H2z" fill="#9a9a9a" />
            <ellipse cx="10.500" cy="8" rx="3.500" ry="6.500" fill="#4a5661" stroke="#b8b8b8" />
          </svg>
        </div>
        <div className={`w-[22px] ${btn}`}>
          <svg viewBox="0 0 16 16" className="h-4 w-4">
            <path d="M2 2h11v2H2zM2 5h11v8H2z" fill="#cfcfcf" />
            <path d="M8 5v10.500l3-3h4z" fill="#f2f2f2" stroke="#333" />
          </svg>
        </div>
      </div>
    </div>
  </div>
);

const StatusBar = () => (
  <div className="flex h-[26px] items-stretch bg-[#1a1a1a]">
    <div className="flex flex-1 items-center pt-[3px] pl-[2px] text-[10.600px] leading-none whitespace-pre text-[#cacaca]">
      {"Successfully saved glass_crack.hip (Thu Aug  2 13:34:54 2018)"}
    </div>
    <div className="flex w-[54px] items-center gap-[9px] bg-[#3a3a3a] pl-[4px]">
      <svg viewBox="0 0 18 18" className="h-[18px] w-[19px]">
        <path d="M1 8c0-5 5-7 9-6 5 1 6 5 5 8l-3 2-3-1-5 1-3-2z" fill="#bdbdbd" />
        <path d="m3 9 3-3 2 2 3-3 2 3" stroke="#8d8d8d" fill="none" />
        <path d="m14 11 4 3.500-4 3.500z" fill="#9a9a9a" />
      </svg>
      <svg viewBox="0 0 16 16" className="h-4 w-4" fill="none" stroke="#696969" strokeWidth="2">
        <path d="M2 6c2-4 8-4 11-1M14 10c-2 4-8 4-11 1M14 1v5H9M2 15v-5h5" />
      </svg>
    </div>
    <div className="my-px flex w-[93px] items-center justify-center border-l border-[#6a6a6a] bg-[linear-gradient(#505050,#424242)] text-[10.600px] leading-none text-[#d2d2d2]">
      Auto Update
    </div>
    <UpDown />
  </div>
);

export default function App() {
  return (
    <div className="flex h-[1018px] w-[1920px] flex-col overflow-hidden bg-[#1c1c1c] font-['Noto_Sans_CJK_SC',sans-serif]">
      <Defs />
      <TopBar />
      <Shelves />
      <PaneTabs />
      <PathBar />
      <NetMenu />
      <Canvas />
      <Playbar />
      <StatusBar />
    </div>
  );
}
